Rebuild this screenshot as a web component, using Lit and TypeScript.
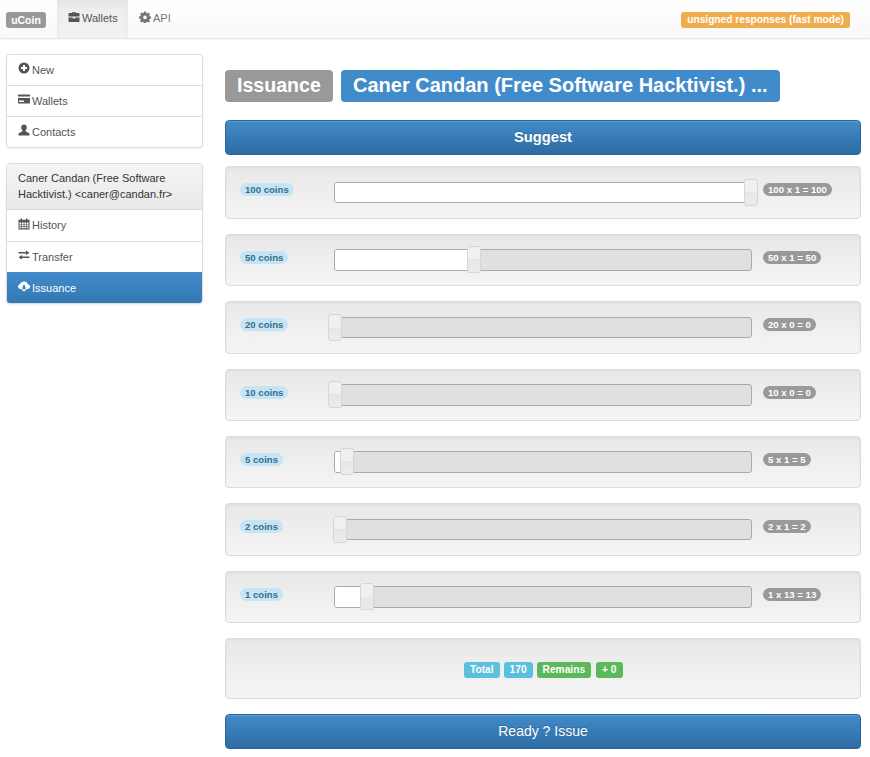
import { LitElement, html, css, svg } from "lit";
import { customElement } from "lit/decorators.js";

const icons: Record<string, unknown> = {
  briefcase: svg`<path d="M4.2 2V1h3.6v1h2.7c.6 0 1 .4 1 1v2.6H.5V3c0-.6.4-1 1-1zM5 2h2v-.3H5zM.5 6.4h4.3V7.500h2.400V6.400h4.300V10c0 .6-.4 1-1 1h-9c-.6 0-1-.4-1-1z"/>`,
  cog: svg`<path fill-rule="evenodd" d="M5 .5h2l.3 1.500 1 .4 1.300-.8 1.400 1.400-.8 1.300.4 1 1.500.300v2l-1.500.3-.4 1 .8 1.300-1.400 1.400-1.300-.8-1 .4-.3 1.500H5l-.3-1.500-1-.4-1.300.8L1 10l.8-1.300-.4-1L0 7.400v-2l1.500-.3.400-1L1.100 2.800 2.400 1.400l1.300.8 1-.4zM6 4.600a1.800 1.800 0 1 0 0 3.600 1.800 1.800 0 0 0 0-3.600z"/>`,
  plus: svg`<path fill-rule="evenodd" d="M6 .5a5.500 5.500 0 1 1 0 11 5.500 5.500 0 0 1 0-11zM5 3v2H3v2h2v2h2V7h2V5H7V3z"/>`,
  card: svg`<path d="M.5 1.500h11c.3 0 .5.2.5.5v1.500H0V2c0-.3.2-.5.5-.5zM0 5h12v5c0 .3-.2.5-.5.5H.5C.2 10.500 0 10.300 0 10zm1 2.500V9h5V7.500z" fill-rule="evenodd"/>`,
  user: svg`<path d="M6 .5c1.700 0 2.800 1.300 2.800 3.100 0 1.300-.6 2.400-1.300 3 0 .7.300 1 1.200 1.300 1.500.5 2.800 1 2.800 2.200v1.400H.5V10.100c0-1.200 1.300-1.700 2.800-2.200.9-.3 1.200-.6 1.200-1.300-.7-.6-1.300-1.700-1.300-3C3.200 1.800 4.300.5 6 .5z"/>`,
  calendar: svg`<path fill-rule="evenodd" d="M2.500.5h1.500v1.200h4V.5h1.500v1.200H11.500V11.500H.5V1.700h2zM1.500 4.500v1.400h1.800V4.500zm2.500 0v1.400h1.700V4.500zm2.400 0v1.400h1.700V4.500zm2.400 0v1.400h1.700V4.500zM1.500 6.600V8h1.800V6.600zm2.500 0V8h1.700V6.600zm2.400 0V8h1.700V6.600zm2.400 0V8h1.700V6.600zM1.500 8.700v1.500h1.800V8.700zm2.500 0v1.500h1.700V8.700zm2.400 0v1.500h1.700V8.700zm2.400 0v1.500h1.700V8.700z"/>`,
  transfer: svg`<path d="M8 1.500V3H.5v1.400H8v1.500l3.500-2.200zM4 6 .5 8.200 4 10.400V9h7.500V7.500H4z"/>`,
  cloud: svg`<path fill-rule="evenodd" d="M6.500 1.500c1.700 0 3 1.200 3.200 2.800 1.300.1 2.300 1.100 2.300 2.400C12 8 11 9 9.700 9H8.900L6 11.800 3.100 9H2.500C1.100 9 0 8 0 6.600 0 5.400.9 4.400 2 4.200 2.500 2.600 4.300 1.500 6.500 1.500zM5 5v2.500H3.500L6 10l2.500-2.500H7V5z"/>`,
};

const icon = (name: string) =>
  html`<svg class="ico" viewBox="0 0 12 12" fill="currentColor" aria-hidden="true">${icons[name]}</svg>`;

const rows = [
  { coins: "100 coins", result: "100 x 1 = 100", knob: 410, fill: 411 },
  { coins: "50 coins", result: "50 x 1 = 50", knob: 133, fill: 134 },
  { coins: "20 coins", result: "20 x 0 = 0", knob: -6, fill: 0 },
  { coins: "10 coins", result: "10 x 0 = 0", knob: -6, fill: 0 },
  { coins: "5 coins", result: "5 x 1 = 5", knob: 6, fill: 7 },
  { coins: "2 coins", result: "2 x 1 = 2", knob: -1, fill: 0 },
  { coins: "1 coins", result: "1 x 13 = 13", knob: 26, fill: 27 },
];

@customElement("app-root")
export class AppRoot extends LitElement {
  static styles = css`
    :host {
      display: block;
      font-family: "Liberation Sans", Arial, sans-serif;
      font-size: 11px;
      color: #333;
      line-height: 17px;
    }
    * { box-sizing: border-box; }
    .ico { width: 12px; height: 12px; flex: none; position: relative; top: -2px; }
    .navbar {
      height: 39px;
      display: flex;
      align-items: stretch;
      background: linear-gradient(#fff, #f8f8f8);
      border-bottom: 1px solid #e7e7e7;
      box-shadow: 0 1px 2px rgba(0,0,0,.04);
      padding: 0 20px 0 6px;
    }
    .brand {
      align-self: flex-start;
      margin: 12px 11px 0 0;
    }
    .lab {
      display: inline-block;
      color: #fff;
      font-weight: 700;
      border-radius: 3px;
      white-space: nowrap;
    }
    .brand.lab { background: #999; font-size: 10.500px; line-height: 16px; height: 16px; width: 40px; text-align: center; }
    .tab {
      display: flex;
      align-items: center;
      gap: 2px;
      height: 38px;
      padding: 0 11px 2px;
      color: #777;
      font-size: 11px;
    }
    .tab.on {
      color: #555;
      width: 71px;
      padding-right: 0;
      background: linear-gradient(#ebebeb, #f3f3f3);
      box-shadow: inset 0 3px 9px rgba(0,0,0,.035);
    }
    .tab .ico { top: -1px; }
    .warn {
      margin: 12px 0 0 auto;
      align-self: flex-start;
      background: #f0ad4e;
      font-size: 10.200px;
      line-height: 16px;
      height: 16px;
      padding: 0 6px;
    }
    .page { display: flex; align-items: flex-start; padding: 15px 9px 8px 6px; gap: 22px; }
    .side { width: 197px; flex: none; display: flex; flex-direction: column; gap: 15px; }
    .list {
      border: 1px solid #ddd;
      border-radius: 4px;
      overflow: hidden;
      background: #fff;
      box-shadow: 0 1px 2px rgba(0,0,0,.075);
    }
    .item {
      height: 31px;
      display: flex;
      align-items: center;
      gap: 2px;
      padding: 0 11px;
      color: #555;
      font-size: 11px;
      border-top: 1px solid #ddd;
    }
    .item:first-child { border-top: 0; height: 30px; }
    .item.act {
      color: #fff;
      background: linear-gradient(#428bca, #3278b3);
      border-top-color: #428bca;
    }
    .head {
      padding: 6px 11px 7px;
      background: linear-gradient(#f5f5f5, #e8e8e8);
      color: #333;
      font-size: 11px;
      line-height: 16px;
      height: 46px;
      border-bottom: 1px solid #ddd;
    }
    .head + .item { border-top: 0; }
    .main { width: 636px; flex: none; }
    .title { display: flex; gap: 8px; padding-top: 16px; margin-bottom: 18px; }
    .title .lab { font-size: 20px; height: 32px; line-height: 31px; padding: 0 12px; border-radius: 4px; }
    .title .gray { background: #999; font-size: 19.600px; width: 108px; }
    .title .blue { background: #428bca; width: 439px; overflow: hidden; }
    .btn {
      display: block;
      width: 100%;
      height: 35px;
      border: 1px solid #2b669a;
      border-radius: 4px;
      color: #fff;
      font: 14px/33px "Liberation Sans", Arial, sans-serif;
      text-align: center;
      background: linear-gradient(#428bca, #2d6ca2);
      padding: 0;
      box-shadow: inset 0 1px 0 rgba(255,255,255,.15);
      text-shadow: 0 -1px 0 rgba(0,0,0,.2);
    }
    .btn.b { font-weight: 700; font-size: 14.700px; }
    .rows { display: flex; flex-direction: column; gap: 15px; margin-top: 11.400px; }
    .well {
      border: 1px solid #dcdcdc;
      border-radius: 4px;
      background: linear-gradient(#e8e8e8, #f5f5f5);
      box-shadow: inset 0 1px 3px rgba(0,0,0,.05);
    }
    .row { height: 52.400px; display: flex; align-items: center; padding-left: 14px; }
    .coin {
      width: 94px;
      flex: none;
      position: relative;
      top: -2.600px;
    }
    .coin span {
      display: inline-block;
      background: #c6e4f4;
      color: #31708f;
      font-size: 9.600px;
      font-weight: 700;
      line-height: 13px;
      height: 13px;
      padding: 0 5px;
      border-radius: 7px;
    }
    .track {
      position: relative;
      width: 418px;
      height: 21.600px;
      flex: none;
      border: 1px solid #aaa;
      border-radius: 3px;
      background: #e0e0e0;
    }
    .fill {
      position: absolute;
      left: 0;
      top: 0;
      bottom: 0;
      background: #fff;
      border-radius: 2px 0 0 2px;
    }
    .knob {
      position: absolute;
      top: -4px;
      width: 14px;
      height: 27px;
      border: 1px solid #d6d6d6;
      border-radius: 3px;
      background: linear-gradient(#f0f0f0 50%, #e6e6e6 50%, #ececec);
    }
    .res {
      margin-left: 11px;
      position: relative;
      top: -2.600px;
      background: #999;
      color: #fff;
      font-size: 9.600px;
      font-weight: 700;
      line-height: 13px;
      height: 13px;
      padding: 0 5px;
      border-radius: 7px;
      white-space: nowrap;
    }
    .sum {
      height: 61px;
      margin-top: 14.900px;
      display: flex;
      gap: 4px;
      padding-left: 238px;
      padding-top: 23px;
    }
    .sum .lab { height: 16px; font-size: 10.200px; line-height: 16px; padding: 0 6px; }
    .sum .lab:last-child { margin-left: 1px; }
    .info { background: #5bc0de; }
    .ok { background: #5cb85c; }
    .main > .btn:last-child { margin-top: 15px; }
  `;

  render() {
    return html`
      <nav class="navbar">
        <span class="lab brand">uCoin</span>
        <a class="tab on">${icon("briefcase")}Wallets</a>
        <a class="tab">${icon("cog")}API</a>
        <span class="lab warn">unsigned responses (fast mode)</span>
      </nav>
      <div class="page">
        <aside class="side">
          <div class="list">
            <div class="item">${icon("plus")}New</div>
            <div class="item">${icon("card")}Wallets</div>
            <div class="item">${icon("user")}Contacts</div>
          </div>
          <div class="list">
            <div class="head">Caner Candan (Free Software Hacktivist.) &lt;caner@candan.fr&gt;</div>
            <div class="item">${icon("calendar")}History</div>
            <div class="item">${icon("transfer")}Transfer</div>
            <div class="item act">${icon("cloud")}Issuance</div>
          </div>
        </aside>
        <main class="main">
          <div class="title">
            <span class="lab gray">Issuance</span>
            <span class="lab blue">Caner Candan (Free Software Hacktivist.) ...</span>
          </div>
          <button class="btn b">Suggest</button>
          <div class="rows">
            ${rows.map(
              (r) => html`
                <div class="well row">
                  <div class="coin"><span>${r.coins}</span></div>
                  <div class="track">
                    <div class="fill" style="width:${r.fill}px"></div>
                    <div class="knob" style="left:${r.knob - 1}px"></div>
                  </div>
                  <span class="res">${r.result}</span>
                </div>
              `
            )}
          </div>
          <div class="well sum">
            <span class="lab info">Total</span>
            <span class="lab info">170</span>
            <span class="lab ok">Remains</span>
            <span class="lab ok">+ 0</span>
          </div>
          <button class="btn">Ready ? Issue</button>
        </main>
      </div>
    `;
  }
}
